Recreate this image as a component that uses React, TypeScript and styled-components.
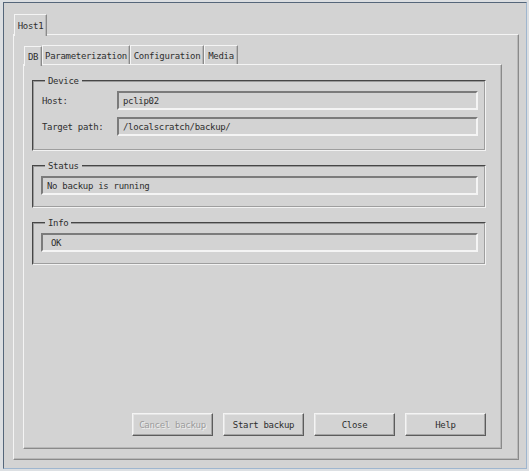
import * as React from 'react';
import styled, { createGlobalStyle } from 'styled-components';

const COLORS = {
  face: '#d3d3d3',
  light: '#f4f4f4',
  shadow: '#8a8a8a',
  dark: '#5c5c5c',
  text: '#2e2e2e',
};

const GlobalStyle = createGlobalStyle`
  html, body {
    margin: 0;
    padding: 0;
    background: #dcdfe2;
  }
  body {
    font-family: "DejaVu Sans Mono", "Liberation Mono", monospace;
    font-size: 9px;
    color: ${COLORS.text};
  }
`;

const Frame = styled.div`
  box-sizing: border-box;
  margin: 2px 2px 2px 3px;
  width: 524px;
  height: 467px;
  background: ${COLORS.face};
  border-top: 1px solid #55667a;
  border-left: 1px solid #55667a;
  border-right: 1px solid #9fb6cf;
  border-bottom: 1px solid #9fb6cf;
  padding: 9px 7px 8px 9px;
  display: flex;
  flex-direction: column;
`;

const TabRow = styled.div<{ $indent?: number; $height?: number }>`
  display: flex;
  align-items: flex-end;
  padding-left: ${(p) => p.$indent ?? 1}px;
  height: ${(p) => p.$height ?? 20}px;
  position: relative;
  z-index: 1;
`;

const Tab = styled.div<{ $active?: boolean; $width: number }>`
  box-sizing: border-box;
  width: ${(p) => p.$width}px;
  height: ${(p) => (p.$active ? '100%' : 'calc(100% - 1px)')};
  margin-bottom: ${(p) => (p.$active ? '-2px' : '0')};
  background: ${COLORS.face};
  border-top: 1px solid ${COLORS.light};
  border-left: 1px solid ${COLORS.light};
  border-right: 1px solid ${COLORS.shadow};
  box-shadow: inset -1px 0 0 #b8b8b8;
  display: flex;
  align-items: center;
  justify-content: center;
  padding-top: 1px;
  white-space: nowrap;
  letter-spacing: -0.3px;
`;

const Pane = styled.div<{ $padding: string }>`
  box-sizing: border-box;
  flex: 1;
  border-top: 1px solid ${COLORS.light};
  border-left: 1px solid ${COLORS.light};
  border-right: 1px solid ${COLORS.shadow};
  border-bottom: 1px solid ${COLORS.shadow};
  box-shadow: inset -1px -1px 0 #b8b8b8;
  padding: ${(p) => p.$padding};
  display: flex;
  flex-direction: column;
`;

const Notebook = styled.div`
  display: flex;
  flex-direction: column;
  flex: 1;
`;

const Group = styled.fieldset<{ $bottom?: number }>`
  margin: 0 0 9px 0;
  padding: 4px 6px ${(p) => p.$bottom ?? 10}px 7px;
  border: 2px groove #f2f2f2;
  border-color: #9a9a9a #f2f2f2 #f2f2f2 #9a9a9a;
  min-width: 0;
`;

const Legend = styled.legend`
  margin-left: 4px;
  padding: 0 3px;
  line-height: 12px;
  font-size: 9px;
  letter-spacing: -0.3px;
`;

const FieldRow = styled.div`
  display: flex;
  align-items: center;
  & + & {
    margin-top: 7px;
  }
`;

const Label = styled.div`
  width: 75px;
  flex: none;
  padding-left: 1px;
  letter-spacing: -0.3px;
`;

const Field = styled.div<{ $indent?: number }>`
  box-sizing: border-box;
  flex: 1;
  height: 19px;
  border-top: 2px solid #7b7b7b;
  border-left: 2px solid #7b7b7b;
  border-right: 2px solid ${COLORS.light};
  border-bottom: 2px solid ${COLORS.light};
  display: flex;
  align-items: center;
  padding-left: ${(p) => p.$indent ?? 4}px;
  letter-spacing: -0.3px;
  white-space: nowrap;
`;

const ButtonRow = styled.div`
  margin-top: auto;
  display: flex;
  justify-content: flex-end;
  gap: 10px;
`;

const Button = styled.div<{ $disabled?: boolean }>`
  box-sizing: border-box;
  width: 81px;
  height: 23px;
  border-top: 1px solid ${COLORS.light};
  border-left: 1px solid ${COLORS.light};
  border-right: 1px solid ${COLORS.dark};
  border-bottom: 1px solid ${COLORS.dark};
  box-shadow: inset -1px -1px 0 #a4a4a4, inset 1px 1px 0 #e4e4e4;
  display: flex;
  align-items: center;
  justify-content: center;
  letter-spacing: -0.3px;
  color: ${(p) => (p.$disabled ? '#9c9c9c' : COLORS.text)};
  text-shadow: ${(p) => (p.$disabled ? '1px 1px 0 #efefef' : 'none')};
`;

const innerTabs = [
  { name: 'DB', width: 18, active: true },
  { name: 'Parameterization', width: 88 },
  { name: 'Configuration', width: 74 },
  { name: 'Media', width: 34 },
];

export const App: React.FC = () => {
  return (
    <>
      <GlobalStyle />
      <Frame>
        <Notebook>
          <TabRow $height={22} $indent={1}>
            <Tab $active $width={33}>Host1</Tab>
          </TabRow>
          <Pane $padding="9px 16px 10px 9px">
            <Notebook>
              <TabRow $height={20} $indent={1}>
                {innerTabs.map((t) => (
                  <Tab key={t.name} $active={t.active} $width={t.width}>
                    {t.name}
                  </Tab>
                ))}
              </TabRow>
              <Pane $padding="10px 15px 12px 8px">
                <Group $bottom={13}>
                  <Legend>Device</Legend>
                  <FieldRow>
                    <Label>Host:</Label>
                    <Field>pclip02</Field>
                  </FieldRow>
                  <FieldRow>
                    <Label>Target path:</Label>
                    <Field>/localscratch/backup/</Field>
                  </FieldRow>
                </Group>
                <Group $bottom={11}>
                  <Legend>Status</Legend>
                  <FieldRow>
                    <Field>No backup is running</Field>
                  </FieldRow>
                </Group>
                <Group $bottom={11}>
                  <Legend>Info</Legend>
                  <FieldRow>
                    <Field $indent={8}>OK</Field>
                  </FieldRow>
                </Group>
                <ButtonRow>
                  <Button $disabled>Cancel backup</Button>
                  <Button>Start backup</Button>
                  <Button>Close</Button>
                  <Button>Help</Button>
                </ButtonRow>
              </Pane>
            </Notebook>
          </Pane>
        </Notebook>
      </Frame>
    </>
  );
};

export default App;
